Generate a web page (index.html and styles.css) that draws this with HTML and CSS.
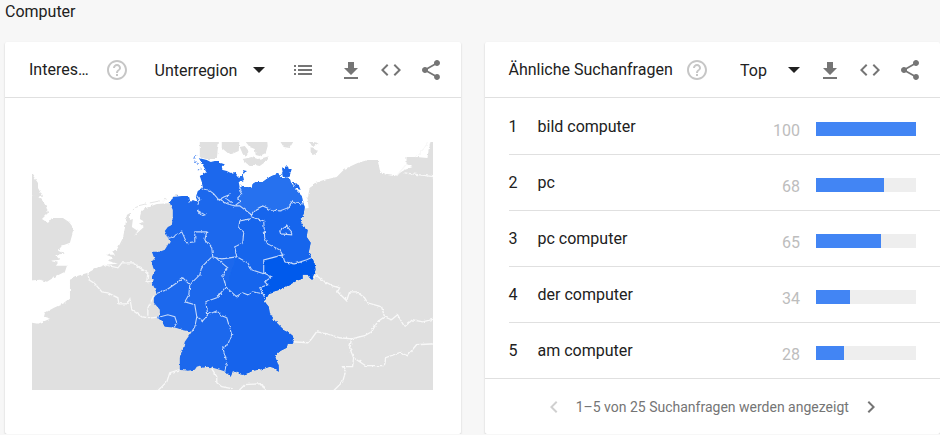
FILE: index.html
```html
<!DOCTYPE html>
<html lang="de">
<head>
<meta charset="utf-8">
<meta name="viewport" content="width=device-width, initial-scale=1">
<title>Computer</title>
<link rel="stylesheet" href="styles.css">
</head>
<body>
<svg class="sprite" aria-hidden="true">
  <symbol id="help" viewBox="0 0 24 24"><path d="M11 18h2v-2h-2v2zm1-16C6.480 2 2 6.480 2 12s4.480 10 10 10 10-4.480 10-10S17.520 2 12 2zm0 18c-4.410 0-8-3.590-8-8s3.590-8 8-8 8 3.590 8 8-3.590 8-8 8zm0-14c-2.210 0-4 1.790-4 4h2c0-1.100.900-2 2-2s2 .900 2 2c0 2-3 1.750-3 5h2c0-2.250 3-2.500 3-5 0-2.210-1.790-4-4-4z"/></symbol>
  <symbol id="list" viewBox="0 0 24 24"><path d="M3 13h2v-2H3v2zm0 4h2v-2H3v2zm0-8h2V7H3v2zm4 4h14v-2H7v2zm0 4h14v-2H7v2zM7 7v2h14V7H7z"/></symbol>
  <symbol id="download" viewBox="0 0 24 24"><path d="M19 10h-4V4H9v6H5l7 7 7-7zM5 19v2h14v-2H5z"/></symbol>
  <symbol id="code" viewBox="0 0 24 24"><path d="M9.400 16.600L4.800 12l4.600-4.600L8 6l-6 6 6 6 1.400-1.400zm5.200 0l4.600-4.600-4.600-4.600L16 6l6 6-6 6-1.400-1.400z"/></symbol>
  <symbol id="share" viewBox="0 0 24 24"><path d="M18 16.080c-.760 0-1.440.300-1.960.770L8.910 12.700c.050-.230.090-.460.090-.700s-.040-.470-.090-.700l7.050-4.110c.540.500 1.250.810 2.040.810 1.660 0 3-1.340 3-3s-1.340-3-3-3-3 1.340-3 3c0 .240.040.470.090.700L8.040 9.810C7.500 9.310 6.790 9 6 9c-1.660 0-3 1.340-3 3s1.340 3 3 3c.790 0 1.500-.310 2.040-.810l7.120 4.160c-.050.210-.080.430-.080.650 0 1.610 1.310 2.920 2.920 2.920s2.920-1.310 2.920-2.920-1.310-2.920-2.920-2.920z"/></symbol>
  <symbol id="prev" viewBox="0 0 24 24"><path d="M15.410 7.410L14 6l-6 6 6 6 1.410-1.410L10.830 12z"/></symbol>
  <symbol id="next" viewBox="0 0 24 24"><path d="M10 6L8.590 7.410 13.170 12l-4.580 4.590L10 18l6-6z"/></symbol>
</svg>
<h1 class="term">Computer</h1>
<main class="cards">
  <section class="card">
    <header class="head">
      <h2 class="title title-short">Interes…</h2>
      <button class="icon help" aria-label="Hilfe"><svg><use href="#help"/></svg></button>
      <div class="tools">
        <span class="pick pick-region"><select aria-label="Auflösung"><option>Unterregion</option></select></span>
        <button class="icon list" aria-label="Liste"><svg><use href="#list"/></svg></button>
        <div class="actions">
          <button class="icon" aria-label="Herunterladen"><svg><use href="#download"/></svg></button>
          <button class="icon" aria-label="Einbetten"><svg><use href="#code"/></svg></button>
          <button class="icon" aria-label="Teilen"><svg><use href="#share"/></svg></button>
        </div>
      </div>
    </header>
    <div class="map">
      <svg viewBox="32 142 401 248" role="img" aria-label="Karte von Deutschland">
        <defs>
          <path id="germany" d="M199 158L203 159 207 160 211 162 215 161 219 161 221 163 224 164 222 167 223 170 227 171 231 173 235 172 239 177 243 175 244 180 239 182 240 188 243 186 247 187 252 188 253 184 256 182 263 182 267 179 272 176 278 174 283 178 290 178 291 182 293 185 297 190 302 195 303 201 305 207 304 214 300 220 304 226 308 230 307 237 311 243 310 248 309 253 313 259 315 264 316 270 312 280 310 278 308 275 303 275 303 279 297 281 290 285 280 290 270 293 267 298 265 302 269 307 270 313 275 321 283 329 287 331 293 336 294 340 293 344 288 344 287 348 281 351 275 356 277 361 279 367 279 372 276 370 274 368 270 367 264 369 253 371 249 373 243 375 239 374 233 371 231 377 228 374 226 372 220 370 213 368 208 367 203 368 200 366 197 367 195 370 188 371 180 370 180 358 183 350 185 342 192 332 187 331 182 330 176 328 165 327 162 322 158 318 160 313 160 310 154 303 154 298 157 294 155 289 152 283 154 280 152 278 155 272 153 267 152 262 155 260 152 252 160 252 165 250 168 245 170 242 165 231 168 227 172 225 173 217 173 210 170 203 173 197 182 196 188 196 190 203 193 200 198 202 196 197 198 191 203 188 202 182 200 176 207 172 203 165z"/>
          <clipPath id="de"><use href="#germany"/></clipPath>
          <filter id="coast" filterUnits="userSpaceOnUse" x="22" y="132" width="421" height="268"><feTurbulence type="fractalNoise" baseFrequency=".25" numOctaves="2" seed="7" result="n"/><feDisplacementMap in="SourceGraphic" in2="n" scale="3" xChannelSelector="R" yChannelSelector="G"/></filter>
        </defs>
        <g filter="url(#coast)">
          <g class="land">
            <path d="M25 398V323L32 323 38 324 43 322 50 319 44 317 45 313 54 308 65 303 70 299 70 280 78 276 88 273 97 268 105 265 118 264 108 261 114 258 106 255 115 255 112 251 117 250 123 238 125 228 127 215 130 213 130 220 133 219 132 227 138 231 134 236 144 227 139 223 145 222 140 219 141 212 146 208 157 204 172 203 250 215 309 208 308 199 305 195 309 190 313 184 324 180 337 177 345 169 358 163 368 160 378 160 381 173 388 175 395 176 405 170 413 167 407 164 407 157 417 157 428 158 429 150 431 142 434 136 445 136V398z"/>
            <path d="M25 164L32 174 38 183 38 188 43 197 32 195 25 196zM25 197L36 195 42 200 46 206 48 213 42 219 48 223 52 218 63 218 69 222 72 226 73 232 70 243 62 246 58 251 65 254 55 255 60 260 50 261 58 263 56 266 67 266 65 272 55 277 47 282 40 280 25 281zM200 136L200 157 206 159 217 159 218 150 220 136zM222 136V148L228 153 232 154 239 151 240 136zM243 159L248 158 252 157 258 159 263 158 270 156 267 161 260 166 255 165 249 165 245 162zM246 142L250 147 255 149 256 155 260 156 266 153 268 146 267 136H246zM277 136L284 147 290 148 297 136zM311 147L318 151 316 155 311 152zM309 141L313 147 319 143zM240 147L245 146 249 151 247 156 243 154z"/>
            <path class="water" d="M300 187L304 190 310 188 308 198 303 195z"/>
          </g>
          <g class="outline">
            <path d="M88 273L89 280 95 284 102 292 108 293 118 298 119 304 127 304 130 299 132 310 142 317 152 318 160 317M148 316L148 308 152 300 154 296M105 265L118 268 122 263 133 263 140 268 148 273 147 282 152 281"/>
            <path d="M314 279L316 275 322 280 333 286 340 288 338 292 347 301 350 292 357 292 365 298 368 303 382 307 385 317 392 320 398 315 405 327 413 320 423 322 436 319M385 317L378 322 372 332 365 336 352 339M293 342L308 343 312 339 317 332 328 334 340 338 352 339 350 348 354 358 353 367 343 367 346 372 343 382 334 391M354 358L366 366 385 366 386 358 400 353 408 356 417 345 436 344M180 370L170 373 167 382 158 391M212 369L217 377 217 383 222 387 232 389M240 390L245 385 262 384 266 391M405 173L436 177"/>
            <path d="M428 142L425 148 416 157M407 164L397 176"/>
          </g>
          <path class="islets" d="M133 210L138 206 146 204M150 203L160 201M164 200L167 199M173 197L178 195"/>
          <use class="state" href="#germany"/>
          <g clip-path="url(#de)">
            <path class="north" d="M240 180V200L235 205 240 207 252 215 257 209 263 206 272 210 280 211 288 208 293 201 295 203 308 205V165H240z"/>
            <path class="east" d="M252 215L257 209 263 206 272 210 280 211 288 208 293 201 295 203 308 205 318 259 298 261 288 260 283 255 280 250 268 244 265 238 264 221z"/>
            <path class="south" d="M208 315L206 302 217 298 226 288 237 297 253 292 262 294 300 320V380H225L225 370 227 362 223 348 228 345 232 335 227 318 222 316 217 311z"/>
            <path class="center" d="M240 221L239 228 244 232 243 243 235 247 237 257 226 287 237 297 253 292 262 294 300 280 283 255 268 244 264 221 252 215z"/>
            <path class="saxony" d="M282 257L272 258 264 260 264 273 272 277 265 282 268 285 260 288 263 293 265 304 325 290 318 255 308 259 295 264 285 262z"/>
            <g class="borders">
              <path d="M203 189L209 190 214 194 219 200 225 203 235 206 240 206 252 215 257 209 263 206 272 210 280 211 288 208 293 201 295 203 304 204M219 200L224 197 229 195 227 199 232 203M240 187L240 191 242 194 238 198 240 202 235 206M252 215L250 219 240 221 239 228 244 232 243 243 235 247 237 257M252 217L264 221 265 238 268 244 280 250 283 255 272 258 264 260 264 273 272 277 265 282 268 285 260 288 263 293 265 298M283 255L285 262 295 264 307 260 314 257M237 257L248 263 252 270 264 274"/>
              <path d="M165 239L170 238 182 232 187 243 195 242 195 232 207 232 205 240 212 248 213 257 222 259 237 257M236 297L243 293 248 295 253 292 263 294M213 257L211 258 202 267 200 275 190 285 183 278 177 283 167 290 156 294M215 257L222 263 228 268 223 275 226 287 237 297M190 285L189 295 185 302 195 305 197 317 203 321 208 315 206 302 217 298 226 287M197 317L195 327 192 332M208 315L217 311 222 316 227 318 232 335 228 345 223 348 227 362 225 372M157 318L168 315 175 317 177 323 173 330M197 210L205 215 202 216zM197 196L200 200 198 205M280 231L287 226 292 232 292 235 281 234z"/>
            </g>
          </g>
          <path class="state" d="M282 167L285 169 288 165 289 169 292 169 290 176 286 178 281 174 283 172zM293 182L299 185 301 190 295 188zM243 170L247 171 245 174z"/>
          <path class="islets coast" d="M196 155L195 159M199 163L197 165M202 169L198 170M195 161L196 163"/>
        </g>
      </svg>
    </div>
  </section>

  <section class="card">
    <header class="head">
      <h2 class="title">Ähnliche Suchanfragen</h2>
      <button class="icon help" aria-label="Hilfe"><svg><use href="#help"/></svg></button>
      <div class="tools">
        <span class="pick pick-sort"><select aria-label="Sortierung"><option>Top</option></select></span>
        <div class="actions">
          <button class="icon" aria-label="Herunterladen"><svg><use href="#download"/></svg></button>
          <button class="icon" aria-label="Einbetten"><svg><use href="#code"/></svg></button>
          <button class="icon" aria-label="Teilen"><svg><use href="#share"/></svg></button>
        </div>
      </div>
    </header>
    <div class="queries">
      <table>
        <tbody>
          <tr><td class="rank">1</td><td>bild computer</td><td class="value">100</td><td class="meter"><div class="bar"><div class="fill" style="width:100%"></div></div></td></tr>
          <tr><td class="rank">2</td><td>pc</td><td class="value">68</td><td class="meter"><div class="bar"><div class="fill" style="width:68%"></div></div></td></tr>
          <tr><td class="rank">3</td><td>pc computer</td><td class="value">65</td><td class="meter"><div class="bar"><div class="fill" style="width:65%"></div></div></td></tr>
          <tr><td class="rank">4</td><td>der computer</td><td class="value">34</td><td class="meter"><div class="bar"><div class="fill" style="width:34%"></div></div></td></tr>
          <tr><td class="rank">5</td><td>am computer</td><td class="value">28</td><td class="meter"><div class="bar"><div class="fill" style="width:28%"></div></div></td></tr>
        </tbody>
      </table>
    </div>
    <footer class="pager">
      <button class="icon prev" aria-label="Zurück" disabled><svg><use href="#prev"/></svg></button>
      <span>1–5 von 25 Suchanfragen werden angezeigt</span>
      <button class="icon" aria-label="Weiter"><svg><use href="#next"/></svg></button>
    </footer>
  </section>
</main>
</body>
</html>
```
FILE: styles.css
```css
* { box-sizing: border-box; }
body {
  margin: 0;
  padding-left: 5px;
  background: #f7f7f7;
  color: #212121;
  font: 16px/24px Roboto, sans-serif;
}
h1, h2 { margin: 0; font-size: 16px; font-weight: 400; }
.sprite { display: none; }
.term { padding-bottom: 18px; }
.cards {
  display: grid;
  grid-template-columns: 1fr 1fr;
  gap: 24px;
}
.card {
  min-width: 0;
  background: #fff;
  border-radius: 2px;
  box-shadow: 0 1px 2px rgba(0, 0, 0, .2);
}
.head {
  display: flex;
  align-items: center;
  height: 56px;
  padding: 0 18px 0 24px;
  border-bottom: 1px solid #e0e0e0;
}
.title { margin-right: 12px; white-space: nowrap; }
.title-short { width: 64px; }
.icon {
  display: block;
  width: 24px;
  height: 24px;
  padding: 0;
  border: 0;
  background: none;
  color: #757575;
}
.icon svg { display: block; width: 24px; height: 24px; fill: currentColor; }
.help { color: #c6c6c6; }
.tools { display: flex; align-items: center; margin-left: auto; }
.actions { display: flex; gap: 16px; }
.list { margin-right: 24px; }
.pick { position: relative; }
.pick::after {
  content: "";
  position: absolute;
  top: 9px;
  right: 0;
  border: solid transparent;
  border-width: 6px 6px 0;
  border-top-color: #212121;
  pointer-events: none;
}
.pick select {
  display: block;
  width: 100%;
  height: 24px;
  padding: 1px 0 0;
  border: 0;
  appearance: none;
  background: none;
  color: inherit;
  font: inherit;
}
.pick-region { width: 110px; margin-right: 26px; }
.pick-sort { width: 60px; margin-right: 18px; }

.map { padding: 44px 28px 44px 27px; }
.map svg { display: block; width: 100%; height: auto; }
.land { fill: #e0e0e0; }
.water { fill: #fff; }
.outline { fill: none; stroke: #f8f8f8; stroke-width: 1.3; }
.state { fill: #1a68ed; }
.north { fill: #2671ef; }
.east, .center { fill: #1565ed; }
.south { fill: #1263ec; }
.saxony { fill: #025aec; }
.borders { fill: none; stroke: #c4d8fb; stroke-width: 1.1; }
.islets { fill: none; stroke: #e4e4e4; stroke-width: 1; }
.coast { stroke: #6a9df5; }

.queries { padding: 1px 0 0 24px; }
table { width: 100%; border-collapse: separate; border-spacing: 0; }
td { height: 56px; padding: 0; border-bottom: 1px solid #e0e0e0; }
tr:last-child td { height: 55px; border-bottom: 0; }
.rank { width: 29px; }
.value { padding: 8px 16px 0 0; color: #bdbdbd; text-align: right; }
.meter { width: 124px; padding: 4px 24px 0 0; }
.bar { height: 14px; background: #eee; }
.fill { height: 100%; background: #4285f4; }
.pager {
  display: flex;
  align-items: center;
  justify-content: center;
  gap: 10px;
  height: 56px;
  border-top: 1px solid #e0e0e0;
  color: #757575;
  font-size: 14px;
}
.prev { color: #d0d0d0; }
```
